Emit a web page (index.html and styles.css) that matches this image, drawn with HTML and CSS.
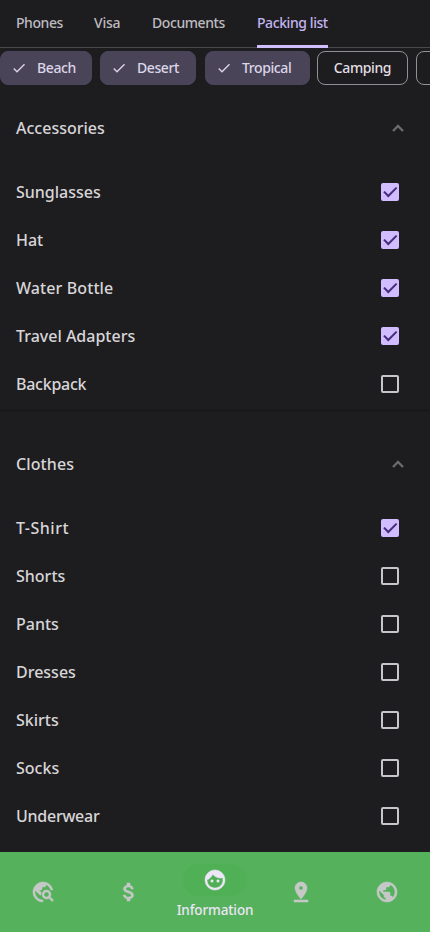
FILE: index.html
```html
<!DOCTYPE html>
<html lang="en">
<head>
<meta charset="utf-8">
<meta name="viewport" content="width=device-width">
<title>Packing list</title>
<link rel="stylesheet" href="styles.css">
</head>
<body>
<svg class="defs" width="0" height="0">
  <symbol id="check" viewBox="0 0 24 24"><path d="M9 16.17 4.83 12l-1.42 1.41L9 19 21 7l-1.41-1.41z"/></symbol>
  <symbol id="up" viewBox="0 0 24 24"><path d="m7 15 5-5 5 5" fill="none" stroke="currentColor" stroke-width="2.3"/></symbol>
  <symbol id="on" viewBox="0 0 18 18"><rect width="18" height="18" rx="2" fill="#d0bcff"/><path d="M3 8.6 7.3 13 15.6 4.6" fill="none" stroke="#442b7c" stroke-width="2"/></symbol>
  <symbol id="off" viewBox="0 0 18 18"><rect x="1" y="1" width="16" height="16" rx="1" fill="none" stroke="#cac5cd" stroke-width="2"/></symbol>
</svg>
<nav class="tabs">
  <a class="tab phones">Phones</a><a class="tab visa">Visa</a><a class="tab docs">Documents</a><a class="tab active">Packing list</a>
</nav>
<div class="chips">
  <div class="chip selected beach"><svg><use href="#check"/></svg><span>Beach</span></div>
  <div class="chip selected desert"><svg><use href="#check"/></svg><span>Desert</span></div>
  <div class="chip selected tropical"><svg><use href="#check"/></svg><span>Tropical</span></div>
  <div class="chip camping"><span>Camping</span></div>
  <div class="chip next"></div>
</div>
<main>
  <section class="group">
    <div class="head"><span>Accessories</span><svg><use href="#up"/></svg></div>
    <div class="row"><span>Sunglasses</span><svg><use href="#on"/></svg></div>
    <div class="row"><span>Hat</span><svg><use href="#on"/></svg></div>
    <div class="row"><span class="loose">Water Bottle</span><svg><use href="#on"/></svg></div>
    <div class="row"><span>Travel Adapters</span><svg><use href="#on"/></svg></div>
    <div class="row"><span class="snug">Backpack</span><svg><use href="#off"/></svg></div>
  </section>
  <section class="group">
    <div class="head"><span class="loose">Clothes</span><svg><use href="#up"/></svg></div>
    <div class="row"><span class="wide">T-Shirt</span><svg><use href="#on"/></svg></div>
    <div class="row"><span>Shorts</span><svg><use href="#off"/></svg></div>
    <div class="row"><span>Pants</span><svg><use href="#off"/></svg></div>
    <div class="row"><span>Dresses</span><svg><use href="#off"/></svg></div>
    <div class="row"><span>Skirts</span><svg><use href="#off"/></svg></div>
    <div class="row"><span>Socks</span><svg><use href="#off"/></svg></div>
    <div class="row"><span class="snug">Underwear</span><svg><use href="#off"/></svg></div>
  </section>
</main>
<nav class="bottom">
  <a class="item"><svg viewBox="0 0 24 24"><path d="M19.3 16.9c.4-.7.7-1.5.7-2.4 0-2.5-2-4.5-4.5-4.5S11 12 11 14.5s2 4.5 4.5 4.5c.9 0 1.7-.3 2.4-.7l3.2 3.2 1.4-1.4-3.2-3.2zm-3.8.1c-1.4 0-2.5-1.1-2.5-2.5s1.1-2.5 2.5-2.5 2.5 1.1 2.5 2.5-1.1 2.5-2.5 2.5zM12 20v2C6.48 22 2 17.52 2 12S6.48 2 12 2c4.84 0 8.87 3.44 9.8 8h-2.07c-.64-2.46-2.4-4.47-4.73-5.41V5c0 1.1-.9 2-2 2h-2v2c0 .55-.45 1-1 1H8v2h2v3H9l-4.79-4.79C4.08 10.79 4 11.38 4 12c0 4.41 3.59 8 8 8z"/><path d="M5 10 9 14 10 12 8 10 11 7 14 6 14 3.500 9 3.500z" stroke="none"/></svg></a>
  <a class="item"><svg viewBox="0 0 24 24"><path d="M11.8 10.9c-2.27-.59-3-1.2-3-2.15 0-1.09 1.01-1.85 2.7-1.85 1.78 0 2.44.85 2.5 2.1h2.21c-.07-1.72-1.12-3.3-3.21-3.81V3h-3v2.16c-1.94.42-3.5 1.68-3.5 3.61 0 2.31 1.91 3.46 4.7 4.13 2.5.6 3 1.48 3 2.41 0 .69-.49 1.79-2.7 1.79-2.06 0-2.87-.92-2.98-2.1h-2.2c.12 2.19 1.76 3.42 3.68 3.83V21h3v-2.15c1.95-.37 3.5-1.5 3.5-3.55 0-2.84-2.43-3.81-4.7-4.4z"/></svg></a>
  <a class="item current"><span class="pill"><svg viewBox="0 0 24 24"><path d="M10.25 13c0 .69-.56 1.25-1.25 1.25S7.75 13.69 7.75 13s.56-1.25 1.25-1.25 1.25.56 1.25 1.25zM15 11.75c-.69 0-1.25.56-1.25 1.25s.56 1.25 1.25 1.25 1.25-.56 1.25-1.25-.56-1.25-1.25-1.25zm7 .25c0 5.52-4.48 10-10 10S2 17.52 2 12 6.48 2 12 2s10 4.48 10 10zm-2 0c0-.78-.12-1.53-.33-2.24-.7.15-1.42.24-2.17.24-3.13 0-5.92-1.44-7.76-3.69C8.69 8.87 6.6 10.88 4 11.86c.01.04 0 .09 0 .14 0 4.42 3.58 8 8 8s8-3.58 8-8z"/></svg></span><span class="label">Information</span></a>
  <a class="item"><svg viewBox="0 0 24 24"><path d="M18 8c0-3.31-2.69-6-6-6S6 4.69 6 8c0 4.5 6 11 6 11s6-6.5 6-11zm-8 0c0-1.1.9-2 2-2s2 .9 2 2-.89 2-2 2c-1.1 0-2-.9-2-2zM5 20v2h14v-2H5z"/></svg></a>
  <a class="item"><svg viewBox="0 0 24 24"><path d="M12 2C6.48 2 2 6.48 2 12s4.48 10 10 10 10-4.48 10-10S17.52 2 12 2zm-1 17.93c-3.95-.49-7-3.85-7-7.93 0-.62.08-1.21.21-1.79L9 15v1c0 1.1.9 2 2 2v1.93zm6.9-2.54c-.26-.81-1-1.39-1.9-1.39h-1v-3c0-.55-.45-1-1-1H8v-2h2c.55 0 1-.45 1-1V7h2c1.1 0 2-.9 2-2v-.41c2.93 1.19 5 4.06 5 7.41 0 2.08-.8 3.97-2.1 5.39z"/></svg></a>
</nav>
</body>
</html>
```
FILE: styles.css
```css
* { box-sizing: border-box; }
body {
  margin: 0;
  height: 932px;
  overflow: hidden;
  display: flex;
  flex-direction: column;
  background: #1d1d1f;
  color: #d8d5d8;
  font-family: "Noto Sans", sans-serif;
  font-weight: 470;
}
svg { display: block; flex: none; fill: currentColor; }
.defs { position: absolute; }
.tabs {
  display: flex;
  gap: 32px;
  height: 48px;
  flex: none;
  padding: 0 16px;
  border-bottom: 1px solid #49484b;
  font-size: 14px;
  letter-spacing: -0.42px;
  line-height: 46px;
  color: #bebbc0;
  white-space: nowrap;
}
.tab { height: 48px; }
.active { color: #c4b4f0; border-bottom: 3px solid #cfc0fd; border-radius: 2px 2px 0 0; }
.phones { width: 46px; }
.visa { width: 26px; letter-spacing: -0.2px; }
.docs { width: 73px; }
.active { width: 71px; }
.chips {
  display: flex;
  flex: none;
  height: 56px;
  padding-top: 3px;
  overflow: hidden;
  font-size: 14px;
  letter-spacing: -0.4px;
}
.chip {
  flex: none;
  display: flex;
  align-items: center;
  justify-content: center;
  height: 34px;
  border: 1px solid #938f96;
  border-radius: 8px;
  color: #e2dfe3;
  white-space: nowrap;
}
.chip span { line-height: 18px; padding-bottom: 1px; }
.chip svg { width: 16px; height: 16px; margin-right: 10px; }
.selected { justify-content: flex-start; padding-left: 10px; border-color: #4a4458; background: #4a4458; color: #dcd5e8; }
.beach { width: 92px; margin-right: 8px; }
.desert { width: 96px; margin-right: 9px; }
.tropical { width: 105px; margin-right: 7px; }
.camping { width: 91px; margin-right: 8px; }
.next { width: 90px; }
.group { height: 308px; border-bottom: 3px solid #19191b; }
.group + .group { height: auto; border: 0; padding-top: 28px; }
.head, .row {
  display: flex;
  align-items: center;
  justify-content: space-between;
  height: 48px;
  padding: 0 31px 0 16px;
  font-size: 16px;
  letter-spacing: 0;
}
.loose { letter-spacing: 0.1px; }
.wide { letter-spacing: 0.5px; }
.snug { letter-spacing: -0.25px; }
.head { margin-bottom: 16px; padding-right: 20px; }
.head svg { width: 24px; height: 24px; color: #6b6a6d; }
.row svg { width: 18px; height: 18px; }
.bottom {
  display: grid;
  grid-template-columns: repeat(5, 1fr);
  height: 80px;
  margin-top: auto;
  background: #56b15c;
  color: #c6c8c8;
}
.item { display: flex; flex-direction: column; align-items: center; justify-content: center; }
.item svg { width: 24px; height: 24px; stroke: currentColor; stroke-width: 0.5px; }
.current { justify-content: flex-start; padding-top: 12px; color: #ece6f7; }
.pill { display: grid; place-items: center; width: 64px; height: 32px; border-radius: 16px; background: #50b055; }
.label { margin-top: 5px; font-size: 13.5px; letter-spacing: -0.12px; line-height: 18px; font-weight: 500; }
```
